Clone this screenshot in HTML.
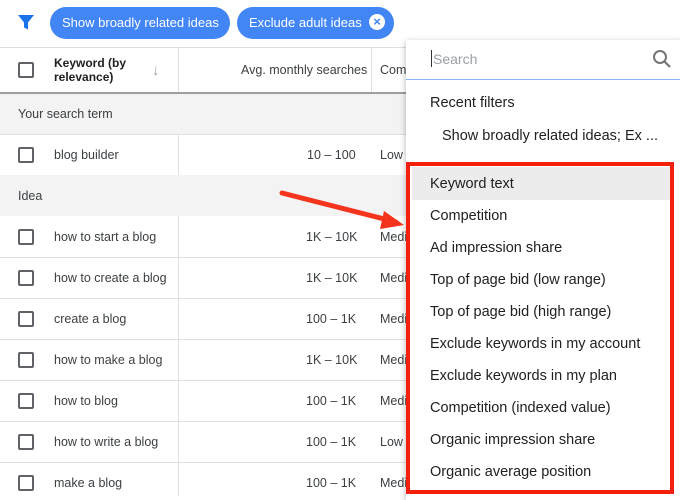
<!DOCTYPE html>
<html><head><style>
*{margin:0;padding:0;box-sizing:border-box}
body{width:680px;height:496px;overflow:hidden;background:#fff;font-family:"Liberation Sans",Arial,sans-serif;position:relative;color:#3c4043}
.chip{position:absolute;top:7px;height:32px;border-radius:16px;background:#4285f4;color:#fff;font-size:13px;line-height:32px;padding:0 12px;white-space:nowrap}
.hline{position:absolute;left:0;width:680px;height:1px;background:#e0e0e0}
.cb{position:absolute;left:18px;width:16px;height:16px;border:2px solid #5f6368;border-radius:2px}
.t{position:absolute;font-size:12.5px;color:#3c4043;white-space:nowrap}
.band{position:absolute;left:0;width:680px;height:41px;background:#f3f3f3}
.vl{position:absolute;width:1px;background:#e0e0e0}
.menu{position:absolute;left:406px;top:40px;width:280px;height:460px;background:#fff;box-shadow:0 2px 6px rgba(0,0,0,.3)}
.mi{position:absolute;left:24px;font-size:14.5px;color:#202124;white-space:nowrap}
</style></head><body>
<svg style="position:absolute;left:17px;top:14px" width="18" height="17" viewBox="0 0 18 17"><path d="M1 1h16l-6 7.5v7l-4-2v-5z" fill="#1a73e8"/></svg>
<div class="chip" style="left:50px;width:180px;padding-left:12px">Show broadly related ideas</div>
<div class="chip" style="left:237px;width:157px">Exclude adult ideas</div>
<div style="position:absolute;left:369px;top:14px;width:16px;height:16px;border-radius:50%;background:#fff;color:#4285f4;font-size:13px;line-height:16px;text-align:center;font-weight:bold">×</div>

<div class="hline" style="top:47px"></div>
<div class="vl" style="left:178px;top:47px;height:46px"></div>
<div class="vl" style="left:371px;top:47px;height:46px"></div>
<div class="cb" style="top:62px"></div>
<div class="t" style="left:54px;top:56px;font-weight:bold;font-size:12px;line-height:14px;color:#202124">Keyword (by<br>relevance)</div>
<div class="t" style="left:152px;top:62px;color:#9aa0a6;font-size:15px">↓</div>
<div class="t" style="left:241px;top:63px">Avg. monthly searches</div>
<div class="t" style="left:380px;top:63px">Com</div>
<div style="position:absolute;left:0;top:92px;width:680px;height:2px;background:#9e9e9e"></div>

<div class="band" style="top:94px"></div>
<div class="t" style="left:18px;top:107px">Your search term</div>
<div class="hline" style="top:134px"></div>
<div class="band" style="top:175px"></div>
<div class="t" style="left:18px;top:189px">Idea</div>

<div class="vl" style="left:178px;top:134px;height:41px"></div>
<div class="cb" style="top:147px"></div>
<div class="t" style="left:54px;top:148px">blog builder</div>
<div class="t" style="left:307px;top:148px">10 – 100</div>
<div class="t" style="left:380px;top:148px">Low</div>

<div class="vl" style="left:178px;top:216px;height:280px"></div>

<div class="cb" style="top:229px"></div><div class="t" style="left:54px;top:230px">how to start a blog</div><div class="t" style="left:306px;top:230px">1K – 10K</div><div class="t" style="left:380px;top:230px">Medi</div>
<div class="hline" style="top:257px"></div>
<div class="cb" style="top:270px"></div><div class="t" style="left:54px;top:271px">how to create a blog</div><div class="t" style="left:306px;top:271px">1K – 10K</div><div class="t" style="left:380px;top:271px">Medi</div>
<div class="hline" style="top:298px"></div>
<div class="cb" style="top:311px"></div><div class="t" style="left:54px;top:312px">create a blog</div><div class="t" style="left:306px;top:312px">100 – 1K</div><div class="t" style="left:380px;top:312px">Medi</div>
<div class="hline" style="top:339px"></div>
<div class="cb" style="top:352px"></div><div class="t" style="left:54px;top:353px">how to make a blog</div><div class="t" style="left:306px;top:353px">1K – 10K</div><div class="t" style="left:380px;top:353px">Medi</div>
<div class="hline" style="top:380px"></div>
<div class="cb" style="top:393px"></div><div class="t" style="left:54px;top:394px">how to blog</div><div class="t" style="left:306px;top:394px">100 – 1K</div><div class="t" style="left:380px;top:394px">Medi</div>
<div class="hline" style="top:421px"></div>
<div class="cb" style="top:434px"></div><div class="t" style="left:54px;top:435px">how to write a blog</div><div class="t" style="left:306px;top:435px">100 – 1K</div><div class="t" style="left:380px;top:435px">Low</div>
<div class="hline" style="top:462px"></div>
<div class="cb" style="top:475px"></div><div class="t" style="left:54px;top:476px">make a blog</div><div class="t" style="left:306px;top:476px">100 – 1K</div><div class="t" style="left:380px;top:476px">Medi</div>

<svg style="position:absolute;left:0;top:0" width="680" height="496"><path d="M282 193 L396 222" stroke="#f4341c" stroke-width="5" stroke-linecap="round"/><path d="M384 211 L404 225 L380 229 Z" fill="#f4341c"/></svg>

<div class="menu">
<div style="position:absolute;left:25px;top:10px;width:1px;height:17px;background:#333"></div>
<div class="mi" style="top:11px;left:27px;color:#9aa0a6;font-size:14px">Search</div>
<svg style="position:absolute;left:246px;top:9px" width="20" height="20" viewBox="0 0 20 20"><circle cx="8" cy="8" r="6" fill="none" stroke="#757575" stroke-width="2"/><path d="M12.5 12.5l5.5 5.5" stroke="#757575" stroke-width="2.2"/></svg>
<div style="position:absolute;left:0;top:39px;width:280px;height:1px;background:#8ab4f8"></div>
<div class="mi" style="top:55px">Recent filters</div>
<div class="mi" style="top:88px;left:36px">Show broadly related ideas; Ex ...</div>
<div style="position:absolute;left:6px;top:127px;width:258px;height:33px;background:#ececec"></div>
<div class="mi" style="top:136px">Keyword text</div>
<div class="mi" style="top:168px">Competition</div>
<div class="mi" style="top:200px">Ad impression share</div>
<div class="mi" style="top:232px">Top of page bid (low range)</div>
<div class="mi" style="top:264px">Top of page bid (high range)</div>
<div class="mi" style="top:296px">Exclude keywords in my account</div>
<div class="mi" style="top:328px">Exclude keywords in my plan</div>
<div class="mi" style="top:360px">Competition (indexed value)</div>
<div class="mi" style="top:392px">Organic impression share</div>
<div class="mi" style="top:424px">Organic average position</div>
</div>
<div style="position:absolute;left:406px;top:162px;width:268px;height:332px;border:4px solid #f4200c"></div>
</body></html>
